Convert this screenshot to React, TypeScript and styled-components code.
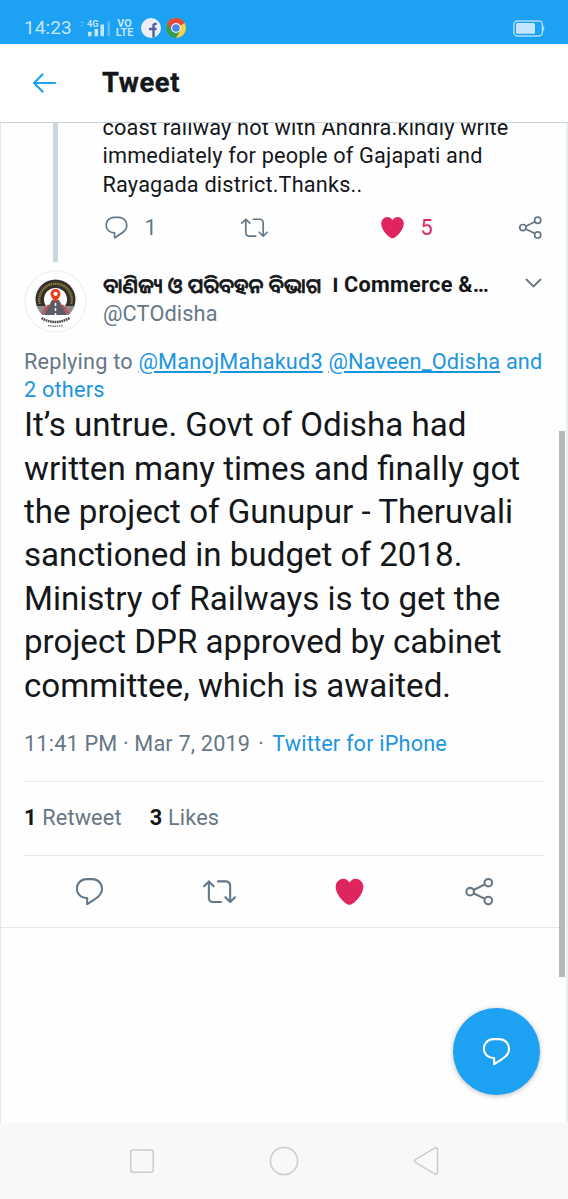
import React from 'react';
import styled, { createGlobalStyle } from 'styled-components';

const Global = createGlobalStyle`
  *, *::before, *::after { box-sizing: border-box; }
  html, body { margin: 0; padding: 0; background: #fff; }
  body { font-family: Roboto, "Noto Sans Oriya", "Noto Sans", sans-serif; color: #14171a; overflow: hidden; }
`;

const Screen = styled.div`
  position: relative;
  width: 568px;
  height: 1199px;
  display: flex;
  flex-direction: column;
  background: #fefefe;
  overflow: hidden;
`;

const StatusBar = styled.header`
  height: 44px;
  flex: none;
  display: flex;
  align-items: center;
  padding: 12px 23px 0 24px;
  background: #1da1f2;
  color: #c3e6fc;
`;
const Clock = styled.span`
  width: 56px;
  font-size: 19px;
  line-height: 32px;
  letter-spacing: 0.1px;
`;
const Signal = styled.svg`
  display: block;
  margin-right: 4px;
`;
const Volte = styled.span`
  display: flex;
  flex-direction: column;
  align-items: center;
  width: 19px;
  margin-right: 7px;
  font-size: 10.8px;
  font-weight: 700;
  line-height: 9.3px;
`;
const AppBadge = styled.svg`
  display: block;
  margin-right: 5px;
`;
const Battery = styled.svg`
  display: block;
  margin-left: auto;
`;

const TitleBar = styled.div`
  height: 79px;
  flex: none;
  display: flex;
  align-items: center;
  padding: 0 31px;
  border-bottom: 1px solid #c9d3db;
  background: #fff;
`;
const Title = styled.h1`
  margin: 0 0 0 45px;
  font-size: 27.3px;
  line-height: 36px;
  font-weight: 700;
  letter-spacing: 0.6px;
  -webkit-text-stroke: 0.4px #14171a;
`;

const Timeline = styled.main`
  flex: 1;
  min-height: 0;
  overflow: hidden;
  border-left: 1px solid #e3e8eb;
  border-right: 2px solid #eceff0;
`;

const Parent = styled.article`
  display: flex;
  height: 139px;
  padding-left: 52px;
`;
const ThreadLine = styled.div`
  width: 5px;
  flex: none;
  background: #ccd6dd;
`;
const ParentBody = styled.div`
  flex: 1;
  margin-top: -9px;
  padding-left: 44.5px;
`;
const Line = styled.div`
  white-space: nowrap;
`;
const ParentText = styled.div`
  font-size: 21.7px;
  line-height: 28.4px;
  letter-spacing: 0.18px;
`;
const SmallActions = styled.div`
  display: flex;
  align-items: center;
  height: 28px;
  margin-top: 14px;
  color: #657786;
`;
const SmallAction = styled.div<{ $width: number; $liked?: boolean }>`
  display: flex;
  align-items: center;
  gap: 15px;
  width: ${(p) => p.$width}px;
  flex: none;
  font-size: 21.7px;
  color: ${(p) => (p.$liked ? '#e0245e' : '#657786')};
`;
const Icon = styled.svg`
  display: block;
  flex: none;
  fill: currentColor;
`;

const Detail = styled.article`
  padding: 8px 22px 0 23px;
  border-bottom: 1px solid #e1e8ed;
  height: 666px;
`;
const Author = styled.div`
  display: flex;
  height: 77.5px;
`;
const Avatar = styled.svg`
  display: block;
  flex: none;
`;
const AuthorNames = styled.div`
  flex: 1;
  padding: 1px 0 0 16px;
  font-size: 21.7px;
  line-height: 28.4px;
`;
const DisplayName = styled.div`
  display: flex;
  height: 29px;
  white-space: pre;
  font-weight: 700;
  letter-spacing: 0.27px;
`;
const OdiaName = styled.span`
  font-family: "Noto Sans Oriya", "Noto Sans", sans-serif;
  font-size: 20.5px;
  font-weight: 500;
  width: 229px;
  letter-spacing: 0;
  -webkit-text-stroke: 0.7px #14171a;
`;
const Danda = styled.span`
  width: 12px;
`;
const Handle = styled.div`
  color: #657786;
  letter-spacing: 0.15px;
`;
const Caret = styled.svg`
  display: block;
  flex: none;
  margin-top: 6px;
`;
const Replying = styled.div`
  font-size: 21.7px;
  line-height: 28.4px;
  letter-spacing: 0.2px;
  color: #657786;
`;
const Link = styled.a<{ $underline?: boolean }>`
  color: #1b95e0;
  text-decoration: ${(p) => (p.$underline ? 'underline' : 'none')};
  text-underline-offset: 2px;
`;
const TweetText = styled.div`
  margin-top: -1.2px;
  font-size: 33.13px;
  line-height: 43.43px;
`;
const Meta = styled.div`
  display: flex;
  align-items: center;
  height: 74px;
  padding-bottom: 1px;
  font-size: 21.7px;
  letter-spacing: 0.17px;
  color: #657786;
  white-space: pre;
  border-bottom: 1px solid #e1e8ed;
`;
const PostedAt = styled(Meta)`
  height: 75px;
  padding-bottom: 2px;
`;
const Dot = styled.span`
  width: 22px;
  text-align: center;
`;
const Stats = styled(Meta)`
  padding-bottom: 2px;
  gap: 28px;
`;
const Count = styled.b`
  color: #14171a;
`;
const Actions = styled.div`
  display: flex;
  align-items: center;
  height: 71px;
  color: #657786;
`;
const Action = styled.div<{ $liked?: boolean }>`
  flex: 1;
  display: flex;
  justify-content: center;
  color: ${(p) => (p.$liked ? '#e0245e' : 'inherit')};
`;

const ScrollThumb = styled.div`
  position: absolute;
  top: 431px;
  right: 3px;
  width: 6px;
  height: 546px;
  background: #b6b8b9;
`;
const ComposeButton = styled.button`
  position: absolute;
  left: 453px;
  top: 1008px;
  width: 87px;
  height: 87px;
  display: flex;
  align-items: center;
  justify-content: center;
  padding: 0;
  border: 0;
  border-radius: 50%;
  background: #1da1f2;
  color: #fff;
  box-shadow: 0 1px 5px rgba(40, 60, 75, 0.35);
`;

const NavBar = styled.nav`
  height: 76px;
  flex: none;
  display: flex;
  align-items: center;
  justify-content: center;
  gap: 112px;
  background: #f8f8f8;
`;
const NavIcon = styled.svg`
  display: block;
  fill: none;
  stroke: #ccc;
  stroke-width: 1.5;
`;

const ReplyIcon = ({ size }: { size: number }) => (
  <Icon width={size} height={size} viewBox="0 0 24 24">
    <path d="M14.046 2.242l-4.148-.01h-.002c-4.374 0-7.8 3.427-7.8 7.802 0 4.098 3.186 7.206 7.465 7.37v3.828c0 .108.044.286.12.403.142.225.384.347.632.347.138 0 .277-.038.402-.118.264-.168 6.473-4.14 8.088-5.506 1.902-1.61 3.04-3.97 3.043-6.312v-.017c-.006-4.367-3.43-7.787-7.8-7.788zm3.787 12.972c-1.134.96-4.862 3.405-6.772 4.643V16.67c0-.414-.335-.75-.75-.75h-.396c-3.66 0-6.318-2.476-6.318-5.886 0-3.534 2.768-6.302 6.3-6.302l4.147.01h.002c3.532 0 6.3 2.766 6.302 6.296-.003 1.91-.942 3.844-2.514 5.176z" />
  </Icon>
);
const RetweetIcon = ({ size }: { size: number }) => (
  <Icon width={size} height={size} viewBox="0 0 24 24">
    <path d="M23.77 15.67c-.292-.293-.767-.293-1.06 0l-2.22 2.22V7.65c0-2.068-1.683-3.75-3.75-3.75h-5.85c-.414 0-.75.336-.75.75s.336.75.75.75h5.85c1.24 0 2.25 1.01 2.25 2.25v10.24l-2.22-2.22c-.293-.293-.768-.293-1.06 0s-.294.768 0 1.06l3.5 3.5c.145.147.337.22.53.22s.383-.072.53-.22l3.5-3.5c.294-.292.294-.767 0-1.06zm-10.66 3.28H7.26c-1.24 0-2.25-1.01-2.25-2.25V6.46l2.22 2.22c.148.147.34.22.532.22s.384-.073.53-.22c.293-.293.293-.768 0-1.06l-3.5-3.5c-.293-.294-.768-.294-1.06 0l-3.5 3.5c-.294.292-.294.767 0 1.06s.767.293 1.06 0l2.22-2.22V16.7c0 2.068 1.683 3.75 3.75 3.75h5.85c.414 0 .75-.336.75-.75s-.337-.75-.75-.75z" />
  </Icon>
);
const HeartIcon = ({ size }: { size: number }) => (
  <Icon width={size} height={size} viewBox="0 0 24 24">
    <path d="M12 21.638h-.014C9.403 21.59 1.95 14.856 1.95 8.478c0-3.064 2.525-5.754 5.403-5.754 2.29 0 3.83 1.58 4.646 2.73.814-1.148 2.354-2.73 4.645-2.73 2.88 0 5.404 2.69 5.404 5.755 0 6.376-7.454 13.11-10.037 13.157H12z" />
  </Icon>
);
const ShareIcon = ({ size }: { size: number }) => (
  <Icon width={size} height={size} viewBox="0 0 24 24">
    <g fill="none" stroke="currentColor" strokeWidth="1.5">
      <circle cx="5.2" cy="12.1" r="2.75" />
      <circle cx="18.4" cy="5.6" r="2.75" />
      <circle cx="18.4" cy="18.6" r="2.75" />
      <path d="M7.7 10.9l8.2-4.1M7.7 13.3l8.2 4.1" />
    </g>
  </Icon>
);

export default function App() {
  return (
    <>
      <Global />
      <Screen>
        <StatusBar>
          <Clock>14:23</Clock>
          <Signal width="31" height="20" viewBox="0 0 31 20">
            <path d="M.5 5L2 3l1.500 2zM.5 7L2 9l1.500-2z" fill="#69c0f6" />
            <text x="7" y="8.800" fontSize="9" fontWeight="700" fill="#c3e6fc">4G</text>
            <path d="M8 13.800h3.500v4.500H8zM14.500 11h3.500v7.300h-3.500zM20.500 6.500h3.500v11.800h-3.500z" fill="#c3e6fc" />
            <path d="M27.500 3.500h2.500v14.800h-2.500z" fill="#5dbaf6" />
          </Signal>
          <Volte>
            <span>VO</span>
            <span>LTE</span>
          </Volte>
          <AppBadge width="20" height="20" viewBox="0 0 20 20">
            <circle cx="10" cy="10" r="10" fill="#eceef3" />
            <path d="M15.700 5.900h-1.200c-1.400 0-2 .7-2 1.900v11.500M8 11h7.500" fill="none" stroke="#4a62a0" strokeWidth="2.400" />
          </AppBadge>
          <AppBadge width="20" height="20" viewBox="0 0 20 20">
            <circle cx="10" cy="10" r="10" fill="#fbd043" />
            <path d="M10 10L1.340 5A10 10 0 0 0 10 20l4.300-7.500z" fill="#2f9e58" />
            <path d="M10 10L5.700 12.500 1.340 5a10 10 0 0 1 17.320 0z" fill="#e24a3b" />
            <circle cx="10" cy="10" r="4.900" fill="#f4f6fa" />
            <circle cx="10" cy="10" r="3.800" fill="#4a86ea" />
          </AppBadge>
          <Battery width="32" height="17" viewBox="0 0 32 17">
            <rect x=".9" y=".9" width="28.500" height="15" rx="3.500" fill="none" stroke="#a9dcfb" strokeWidth="1.500" />
            <rect x="3" y="3" width="19" height="10.800" rx="1.500" fill="#c3e6fc" />
            <path d="M30 6.500h1.200v4H30z" fill="#a9dcfb" />
          </Battery>
        </StatusBar>

        <TitleBar>
          <svg width="26" height="22" viewBox="0 0 26 22" fill="none" stroke="#1da1f2" strokeWidth="2.200" strokeLinecap="round" strokeLinejoin="round">
            <path d="M24 11H3.300M11.500 2.500L3 11l8.500 8.500" />
          </svg>
          <Title>Tweet</Title>
        </TitleBar>

        <Timeline>
          <Parent>
            <ThreadLine />
            <ParentBody>
              <ParentText>
                <Line>coast railway not with Andhra.kindly write</Line>
                <Line>immediately for people of Gajapati and</Line>
                <Line>Rayagada district.Thanks..</Line>
              </ParentText>
              <SmallActions>
                <SmallAction $width={138.5}><ReplyIcon size={27} />1</SmallAction>
                <SmallAction $width={137.5}><RetweetIcon size={27} /></SmallAction>
                <SmallAction $width={138.5} $liked><HeartIcon size={27} />5</SmallAction>
                <SmallAction $width={28}><ShareIcon size={27} /></SmallAction>
              </SmallActions>
            </ParentBody>
          </Parent>

          <Detail>
            <Author>
              <Avatar width="63" height="63" viewBox="0 0 63 63">
                <circle cx="31.500" cy="31.500" r="30.500" fill="#fff" stroke="#f0f1f2" strokeWidth="1.500" />
                <clipPath id="emblem"><circle cx="31.500" cy="29.500" r="20" /></clipPath>
                <g clipPath="url(#emblem)">
                  <path d="M11 9h41v28H11z" fill="#33302e" />
                  <circle cx="31.500" cy="29.500" r="11.500" fill="#fff" />
                  <path d="M11 36h41v9H11z" fill="#8f8b8f" />
                  <path d="M28 30h7l8 15H20z" fill="#5b5c66" />
                  <path d="M25 35L17 45M38 35l8 10" stroke="#c54f58" strokeWidth="2.200" />
                  <path d="M31.500 33v12" stroke="#fff" strokeWidth="1.500" strokeDasharray="3 2" />
                </g>
                <path d="M15.700 34A16.300 16.300 0 1 1 47.300 34" fill="none" stroke="#8d7636" strokeWidth="2.400" strokeDasharray="1.600 .6" />
                <path d="M31.500 33c-2-4-5-6-5-9a5 5 0 0 1 10 0c0 3-3 5-5 9z" fill="#e8401f" />
                <circle cx="31.500" cy="23.800" r="2.100" fill="#fff" />
                <path d="M17.500 48Q31.500 56 45.500 48" fill="none" stroke="#4a4646" strokeWidth="2.400" strokeDasharray="1.700 .6" />
                <path d="M24 55.500q7.500 1.500 15 0" fill="none" stroke="#777" strokeWidth="1.400" strokeDasharray="1.500 .7" />
              </Avatar>
              <AuthorNames>
                <DisplayName><OdiaName>ବାଣିଜ୍ୟ ଓ ପରିବହନ ବିଭାଗ</OdiaName><Danda>।</Danda><span>Commerce &amp;…</span></DisplayName>
                <Handle>@CTOdisha</Handle>
              </AuthorNames>
              <Caret width="20" height="14" viewBox="0 0 20 14" fill="none" stroke="#657786" strokeWidth="1.800">
                <path d="M2 3l7.500 7.500L17 3" />
              </Caret>
            </Author>
            <Replying>
              <Line>Replying to <Link $underline>@ManojMahakud3</Link> <Link $underline>@Naveen_Odisha</Link> <Link>and</Link></Line>
              <Line><Link>2 others</Link></Line>
            </Replying>
            <TweetText>
              <Line>It’s untrue. Govt of Odisha had</Line>
              <Line>written many times and finally got</Line>
              <Line>the project of Gunupur - Theruvali</Line>
              <Line>sanctioned in budget of 2018.</Line>
              <Line>Ministry of Railways is to get the</Line>
              <Line>project DPR approved by cabinet</Line>
              <Line>committee, which is awaited.</Line>
            </TweetText>
            <PostedAt><span>11:41 PM · Mar 7, 2019</span><Dot>·</Dot><Link>Twitter for iPhone</Link></PostedAt>
            <Stats><span><Count>1</Count> Retweet</span><span><Count>3</Count> Likes</span></Stats>
            <Actions>
              <Action><ReplyIcon size={33} /></Action>
              <Action><RetweetIcon size={33} /></Action>
              <Action $liked><HeartIcon size={33} /></Action>
              <Action><ShareIcon size={33} /></Action>
            </Actions>
          </Detail>
        </Timeline>

        <NavBar>
          <NavIcon width="30" height="30" viewBox="0 0 30 30"><rect x="3.700" y="3.900" width="22.500" height="22.300" rx="2.500" /></NavIcon>
          <NavIcon width="30" height="30" viewBox="0 0 30 30"><circle cx="15" cy="15" r="13.600" /></NavIcon>
          <NavIcon width="30" height="30" viewBox="0 0 30 30"><path d="M4.300 13.700L23.500 2.200q3-1.200 3 1.600v22.400q0 2.800-3 1.600L4.300 16.300q-1.600-1.300 0-2.600z" /></NavIcon>
        </NavBar>

        <ScrollThumb />
        <ComposeButton aria-label="Reply"><ReplyIcon size={33} /></ComposeButton>
      </Screen>
    </>
  );
}
